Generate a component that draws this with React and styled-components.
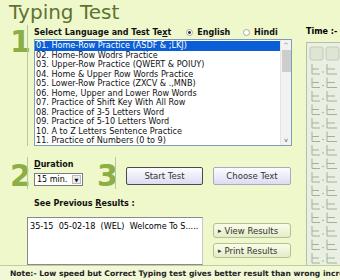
import styled, { createGlobalStyle } from "styled-components"

const Global = createGlobalStyle`
  body { margin: 0; font-family: "DejaVu Sans", Verdana, sans-serif; }
`

const lessons = [
  "01. Home-Row Practice (ASDF & ;LKJ)",
  "02. Home-Row Wodrs Practice",
  "03. Upper-Row Practice (QWERT & POIUY)",
  "04. Home & Upper Row Words Practice",
  "05. Lower-Row Practice (ZXCV & .,MNB)",
  "06. Home, Upper and Lower Row Words",
  "07. Practice of Shift Key With All Row",
  "08. Practice of 3-5 Letters Word",
  "09. Practice of 5-10 Letters Word",
  "10. A to Z Letters Sentence Practice",
  "11. Practice of Numbers (0 to 9)",
]

const Frame = styled.div`
  width: 340px;
  height: 280px;
  overflow: hidden;
  background: #eff8cb;
  display: flex;
  flex-direction: column;
`
const Body = styled.div`
  height: 265px;
  display: flex;
`
const Main = styled.div`
  width: 303px;
  flex-shrink: 0;
  display: flex;
  flex-direction: column;
`
const Title = styled.div`
  height: 28px;
  box-sizing: border-box;
  padding: 0 0 0 9px;
  font-size: 20px;
  line-height: 24px;
  color: #5e7332;
`
const Step = styled.div`
  display: flex;
  align-items: stretch;
  height: ${p => p.h}px;
  margin-top: ${p => p.mt || 0}px;
`
const Num = styled.div`
  box-sizing: border-box;
  flex: 0 0 ${p => p.w || 27}px;
  min-width: 0;
  padding-left: ${p => p.pl || 10}px;
  font-size: 30px;
  font-weight: bold;
  line-height: 1;
  color: #8cae47;
  margin-top: ${p => p.top || 0}px;
`
const Content = styled.div`
  box-sizing: border-box;
  flex: 0 0 ${p => (p.w ? p.w + "px" : "auto")};
  border-left: 1px solid #bcc796;
  padding-left: ${p => p.pl ?? 6}px;
  display: flex;
  flex-direction: column;
`
const LabelRow = styled.div`
  height: 14px;
  display: flex;
  align-items: center;
  font-size: 8px;
  font-weight: bold;
  color: #111;
`
const Label = styled.div`
  font-size: 8px;
  font-weight: bold;
  color: #111;
  height: ${p => p.h || 12}px;
  padding-left: ${p => p.pl || 0}px;
  display: flex;
  align-items: center;
`
const Radio = styled.span`
  display: inline-flex;
  align-items: center;
  margin-left: ${p => p.ml}px;
  &::before {
    content: "";
    width: 5px;
    height: 5px;
    border-radius: 50%;
    border: 1px solid #a8a8a8;
    background: ${p => (p.on ? "radial-gradient(#333 0 1.2px, #fff 1.6px)" : "#fff")};
    margin-right: 4px;
  }
`
const ListBox = styled.div`
  width: 258px;
  height: 107px;
  box-sizing: border-box;
  border: 1px solid #7f9db9;
  background: #fff;
  display: flex;
`
const Items = styled.div`
  flex: 1;
  padding-top: 1px;
`
const Item = styled.div`
  height: 9.5px;
  line-height: 9.5px;
  font-size: 8.1px;
  padding-left: 1px;
  white-space: nowrap;
  color: ${p => (p.sel ? "#fff" : "#111")};
  background: ${p => (p.sel ? "#0b5fd6" : "transparent")};
`
const Scroll = styled.div`
  width: 10px;
  background: #f2f2f2;
  border-left: 1px solid #e4e4e4;
  display: flex;
  flex-direction: column;
  align-items: center;
  font-size: 6px;
  color: #555;
`
const Arrow = styled.div`
  height: 10px;
  line-height: 10px;
`
const Thumb = styled.div`
  width: 9px;
  height: 22px;
  background: #cdcdcd;
`
const Spacer = styled.div`
  flex: 1;
`
const Select = styled.div`
  width: 49px;
  height: 13px;
  box-sizing: border-box;
  border: 1px solid #7a7a7a;
  background: #fff;
  display: flex;
  align-items: center;
  font-size: 8px;
  padding-left: 2px;
  margin-top: 2px;
`
const DropBtn = styled.div`
  width: 9px;
  height: 9px;
  margin-left: auto;
  margin-right: 1px;
  background: #ececec;
  border: 1px solid #bbb;
  box-sizing: border-box;
  font-size: 5px;
  display: flex;
  align-items: center;
  justify-content: center;
`
const Buttons = styled.div`
  display: flex;
  gap: 10px;
  padding-top: 10px;
  padding-left: 10px;
`
const Button = styled.div`
  width: ${p => p.w}px;
  height: 18px;
  box-sizing: border-box;
  border: 1px solid ${p => (p.focus ? "#4c4a44" : "#a9a9bf")};
  border-radius: 2px;
  background: linear-gradient(#fdfdff, #dcdcf3);
  font-size: 8.5px;
  color: #333;
  display: flex;
  align-items: center;
  justify-content: center;
`
const Results = styled.div`
  padding-left: 27px;
  display: flex;
  flex-direction: column;
`
const ResultRow = styled.div`
  display: flex;
  gap: 10px;
`
const ResultBox = styled.div`
  width: 176px;
  height: 48px;
  box-sizing: border-box;
  border: 1px solid #8a8a8a;
  border-right-color: #c8c8c8;
  background: #fff;
  font-size: 8.1px;
  padding: 3px 0 0 2px;
  white-space: pre;
  overflow: hidden;
`
const SideButtons = styled.div`
  display: flex;
  flex-direction: column;
  gap: 5px;
  padding-top: 6px;
`
const GreenButton = styled.div`
  width: 78px;
  height: 15px;
  box-sizing: border-box;
  border: 1px solid #b4bf99;
  border-radius: 3px;
  background: linear-gradient(#fafde9, #e3edc7);
  font-size: 8.5px;
  color: #333;
  display: flex;
  align-items: center;
  padding-left: 4px;
  &::before {
    content: "▸";
    font-size: 7px;
    margin-right: 3px;
  }
`
const Side = styled.div`
  flex: 1;
  display: flex;
  flex-direction: column;
  padding-left: 3px;
`
const TimeLabel = styled.div`
  height: 15px;
  margin-top: 27px;
  font-size: 8px;
  font-weight: bold;
  white-space: nowrap;
`
const Keyboard = styled.div`
  flex: 1;
  border: 1px solid #b7bfa9;
  border-right: none;
  border-bottom: none;
  background: #e9efe3;
  overflow: hidden;
`
const Footer = styled.div`
  height: 15px;
  border-top: 1px solid #c3cc9d;
  background: #f1f8d6;
  font-size: 7.6px;
  font-weight: bold;
  color: #222;
  padding-left: 10px;
  display: flex;
  align-items: center;
  white-space: nowrap;
  overflow: hidden;
`

const KeyArt = () => {
  const rows = []
  for (let i = 0; i < 15; i++) {
    const y = 26 + i * 13.5
    rows.push(
      <g key={i} stroke="#a3b293" strokeWidth="1" fill="none">
        <path d={`M5 ${y - 5} v10 h8`} />
        <path d={`M5 ${y} h7`} />
        <path d={`M20 ${y - 5} v10 h10 M20 ${y} h8`} />
        <circle cx="16" cy={y + 3} r="0.7" fill="#8f9f7c" stroke="none" />
      </g>
    )
  }
  return (
    <svg width="40" height="230" viewBox="0 0 40 230">
      <rect x="3" y="4" width="13" height="13" rx="2" fill="#dde6d3" stroke="#c2ccb4" />
      <rect x="19" y="4" width="13" height="13" rx="2" fill="#dde6d3" stroke="#c2ccb4" />
      {rows}
    </svg>
  )
}

const App = () => {
  return (
    <Frame>
      <Global />
      <Body>
        <Main>
          <Title>Typing Test</Title>
          <Step h={122}>
            <Num top={2}>1</Num>
            <Content>
              <LabelRow>
                <span>Select Language and Test Te<u>x</u>t</span>
                <Radio ml={15} on>English</Radio>
                <Radio ml={13}>Hindi</Radio>
              </LabelRow>
              <ListBox>
                <Items>
                  {lessons.map((l, i) => (
                    <Item key={l} sel={i === 0}>{l}</Item>
                  ))}
                </Items>
                <Scroll>
                  <Arrow>^</Arrow>
                  <Thumb />
                  <Spacer />
                  <Arrow>v</Arrow>
                </Scroll>
              </ListBox>
            </Content>
          </Step>
          <Step h={32} mt={11}>
            <Num top={4}>2</Num>
            <Content w={57}>
              <Label h={14}><span><u>D</u>uration</span></Label>
              <Select>15 min.<DropBtn>▼</DropBtn></Select>
            </Content>
            <Num top={4} w={31} pl={13}>3</Num>
            <Content pl={0}>
              <Buttons>
                <Button w={77} focus>Start Test</Button>
                <Button w={78}>Choose Text</Button>
              </Buttons>
            </Content>
          </Step>
          <Results>
            <Label h={28} pl={7}><span>See Previous <u>R</u>esults :</span></Label>
            <ResultRow>
              <ResultBox>35-15  05-02-18  (WEL)  Welcome To S.....</ResultBox>
              <SideButtons>
                <GreenButton>View Results</GreenButton>
                <GreenButton>Print Results</GreenButton>
              </SideButtons>
            </ResultRow>
          </Results>
        </Main>
        <Side>
          <TimeLabel>Time :- </TimeLabel>
          <Keyboard>
            <KeyArt />
          </Keyboard>
        </Side>
      </Body>
      <Footer>Note:- Low speed but Correct Typing test gives better result than wrong increase speed.</Footer>
    </Frame>
  )
}

export default App
